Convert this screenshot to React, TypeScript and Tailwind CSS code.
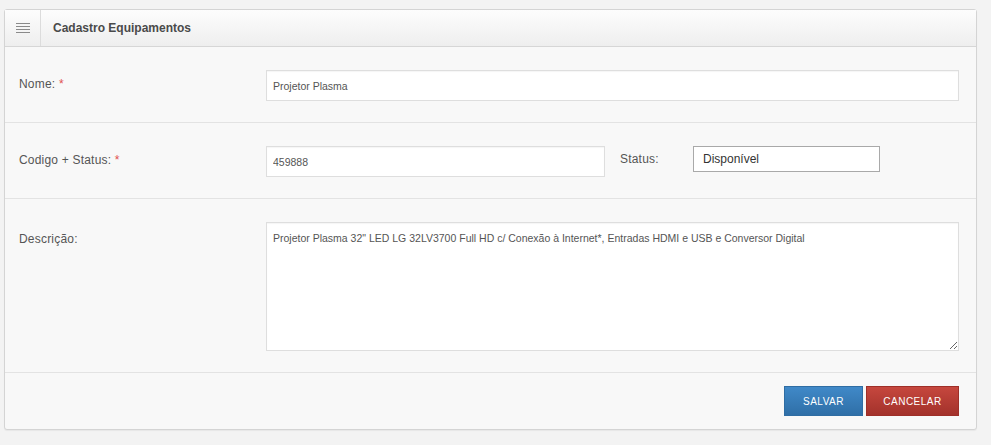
export default function App() {
  return (
    <div className="min-h-[445px] w-[991px] bg-[#f3f3f3] pt-[9px] pl-[4px] font-['Liberation_Sans',Arial,sans-serif]">
      <div className="w-[973px] rounded-[3px] border border-[#d4d4d4] bg-[#f8f8f8] shadow-[0_1px_1px_rgba(0,0,0,0.05)]">
        {/* header */}
        <div className="flex h-[37px] items-stretch border-b border-[#d6d6d6] bg-gradient-to-b from-[#fdfdfd] to-[#eeeeee]">
          <div className="flex w-[36px] items-center justify-center border-r border-[#dcdcdc]">
            <svg width="14" height="11" viewBox="0 0 14 11">
              <rect x="0" y="0" width="14" height="1" fill="#8a8a8a" />
              <rect x="0" y="3" width="14" height="1" fill="#8a8a8a" />
              <rect x="0" y="6" width="14" height="1" fill="#8a8a8a" />
              <rect x="0" y="9" width="14" height="1" fill="#8a8a8a" />
            </svg>
          </div>
          <div className="flex items-center pl-[12px] text-[12px] font-bold text-[#4a4a4a]">
            Cadastro Equipamentos
          </div>
        </div>

        {/* Nome */}
        <div className="flex border-b border-[#e3e3e3] pt-[23px] pr-[17px] pb-[21px] pl-[14px]">
          <div className="w-[247px] pt-[5px] text-[12px] tracking-[0.2px] text-[#555]">
            Nome: <span className="text-[#e05050]">*</span>
          </div>
          <input
            readOnly
            defaultValue="Projetor Plasma"
            className="h-[31px] flex-1 border border-[#dedede] bg-white px-[6px] text-[10.5px] text-[#555] shadow-[inset_0_1px_1px_rgba(0,0,0,0.04)] outline-none"
          />
        </div>

        {/* Codigo + Status */}
        <div className="flex border-b border-[#e3e3e3] pt-[23px] pr-[17px] pb-[21px] pl-[14px]">
          <div className="w-[247px] pt-[5px] text-[12px] tracking-[0.2px] text-[#555]">
            Codigo + Status: <span className="text-[#e05050]">*</span>
          </div>
          <input
            readOnly
            defaultValue="459888"
            className="h-[31px] w-[339px] border border-[#dedede] bg-white px-[6px] text-[10.5px] text-[#555] shadow-[inset_0_1px_1px_rgba(0,0,0,0.04)] outline-none"
          />
          <div className="w-[88px] pt-[4px] pl-[15px] text-[12px] tracking-[0.2px] text-[#555]">Status:</div>
          <div className="flex h-[26px] w-[187px] items-center border border-[#a9a9a9] bg-white px-[9px] text-[12px] text-[#333]">
            Disponível
          </div>
        </div>

        {/* Descricao */}
        <div className="flex border-b border-[#e3e3e3] pt-[23px] pr-[17px] pb-[21px] pl-[14px]">
          <div className="w-[247px] pt-[8px] text-[12px] tracking-[0.2px] text-[#555]">Descrição:</div>
          <textarea
            readOnly
            defaultValue={'Projetor Plasma 32" LED LG 32LV3700 Full HD c/ Conexão à Internet*, Entradas HDMI e USB e Conversor Digital'}
            className="h-[129px] flex-1 resize-y border border-[#dedede] bg-white px-[6px] py-[8px] text-[10.5px] leading-[14px] text-[#555] shadow-[inset_0_1px_1px_rgba(0,0,0,0.04)] outline-none"
          />
        </div>

        {/* footer */}
        <div className="flex justify-end gap-[3px] pt-[13px] pr-[17px] pb-[13px]">
          <button className="h-[30px] w-[79px] border border-[#2f6da3] bg-gradient-to-b from-[#4089c8] to-[#2f6fa7] text-[10px] tracking-[0.5px] text-white">
            SALVAR
          </button>
          <button className="h-[30px] w-[93px] border border-[#9e2f28] bg-gradient-to-b from-[#c6473e] to-[#a3322b] text-[10px] tracking-[0.5px] text-white">
            CANCELAR
          </button>
        </div>
      </div>
    </div>
  )
}
